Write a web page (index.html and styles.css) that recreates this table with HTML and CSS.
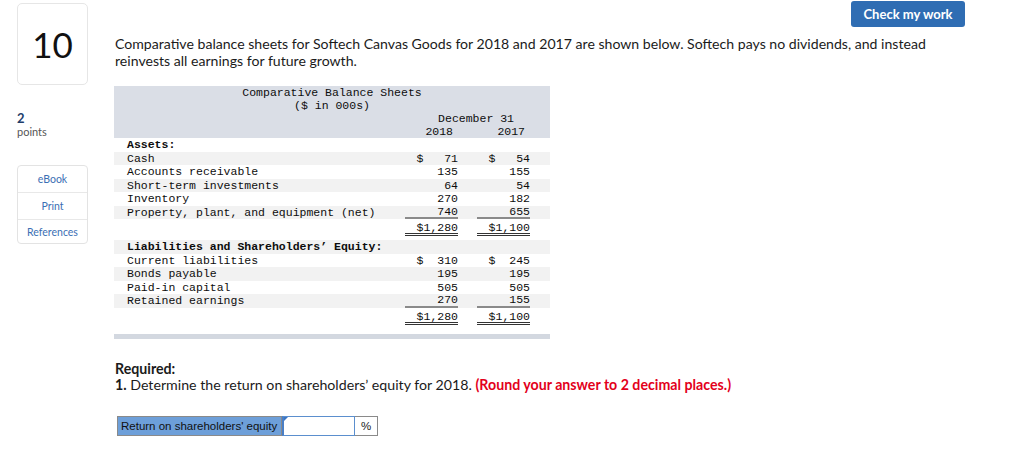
FILE: index.html
```html
<!DOCTYPE html>
<html>
<head>
<meta charset="utf-8">
<link rel="stylesheet" href="styles.css">
</head>
<body>
<div class="page">
  <aside class="side">
    <div class="qnum">10</div>
    <div class="pts">
      <div class="pts-num">2</div>
      <div class="pts-lbl">points</div>
    </div>
    <div class="tools">
      <div class="tool">eBook</div>
      <div class="tool">Print</div>
      <div class="tool">References</div>
    </div>
  </aside>
  <main class="main">
    <div class="topbar"><button class="check">Check my work</button></div>
    <p class="intro">Comparative balance sheets for Softech Canvas Goods for 2018 and 2017 are shown below. Softech pays no dividends, and instead reinvests all earnings for future growth.</p>

    <div class="sheet">
      <div class="sheet-head">
        <div class="ctr">Comparative Balance Sheets</div>
        <div class="ctr">($ in 000s)</div>
        <div class="row"><span class="lbl"></span><span class="dec">December 31</span></div>
        <div class="row"><span class="lbl"></span><span class="num yr">2018</span><span class="num yr">2017</span></div>
      </div>

      <div class="row"><span class="lbl b">Assets:</span></div>
      <div class="row alt"><span class="lbl">Cash</span><span class="num">$   71</span><span class="num">$   54</span></div>
      <div class="row"><span class="lbl">Accounts receivable</span><span class="num">135</span><span class="num">155</span></div>
      <div class="row alt"><span class="lbl">Short-term investments</span><span class="num">64</span><span class="num">54</span></div>
      <div class="row"><span class="lbl">Inventory</span><span class="num">270</span><span class="num">182</span></div>
      <div class="row alt"><span class="lbl">Property, plant, and equipment (net)</span><span class="num ul">740</span><span class="num ul">655</span></div>
      <div class="row tot"><span class="lbl"></span><span class="num dbl">$1,280</span><span class="num dbl">$1,100</span></div>

      <div class="row alt"><span class="lbl b">Liabilities and Shareholders’ Equity:</span></div>
      <div class="row"><span class="lbl">Current liabilities</span><span class="num">$  310</span><span class="num">$  245</span></div>
      <div class="row alt"><span class="lbl">Bonds payable</span><span class="num">195</span><span class="num">195</span></div>
      <div class="row"><span class="lbl">Paid-in capital</span><span class="num">505</span><span class="num">505</span></div>
      <div class="row alt"><span class="lbl">Retained earnings</span><span class="num ul">270</span><span class="num ul">155</span></div>
      <div class="row tot"><span class="lbl"></span><span class="num dbl">$1,280</span><span class="num dbl">$1,100</span></div>
      <div class="sheet-foot"></div>
    </div>

    <div class="req">
      <div class="req-h">Required:</div>
      <div><b>1.</b> Determine the return on shareholders’ equity for 2018. <span class="red">(Round your answer to 2 decimal places.)</span></div>
    </div>

    <div class="answer">
      <div class="ans-lbl">Return on shareholders' equity</div>
      <div class="ans-in"></div>
      <div class="ans-unit">%</div>
    </div>
  </main>
</div>
</body>
</html>
```

FILE: styles.css
```css
* { box-sizing: border-box; }
html, body { margin: 0; padding: 0; background: #fff; }
body { font-family: "Lato", "Open Sans", sans-serif; color: #222; }

.page { display: flex; align-items: flex-start; }

.side { width: 71px; margin-left: 17px; flex: none; padding-top: 3px; }
.qnum {
  height: 82px; border: 1px solid #e6e6e6; border-radius: 5px;
  display: flex; align-items: center; justify-content: center;
  font-size: 35px; color: #111;
}
.pts { margin-top: 26px; }
.pts-num { font-size: 13px; font-weight: 700; color: #1f3e6b; line-height: 14px; }
.pts-lbl { font-size: 11px; color: #555; line-height: 14px; }
.tools { margin-top: 26px; border: 1px solid #e3e3e3; border-radius: 4px; }
.tool { font-size: 10.5px; color: #3b6fb4; text-align: center; height: 27px; line-height: 26px; border-bottom: 1px solid #e8e8e8; }
.tool:last-child { border-bottom: 0; height: 23px; line-height: 24px; }

.main { margin-left: 27px; flex: 1; }
.topbar { display: flex; justify-content: flex-end; padding-right: 59px; padding-top: 1px; height: 35px; }
.check {
  width: 114px; height: 26px; border: 0; border-radius: 3px; background: #2f6db3;
  color: #fff; font-family: "Lato", "Open Sans", sans-serif; font-weight: 700; font-size: 13px;
}
.intro { margin: 0; font-size: 14.1px; line-height: 17px; color: #1b1b1b; width: 835px; }

.sheet { width: 436px; margin-top: 17px; margin-left: -1px; font-family: "Liberation Mono", monospace; font-size: 11.5px; color: #0d0d0d; }
.sheet-head { background: #dadee6; padding: 0; }
.ctr { text-align: center; height: 13px; line-height: 13px; }
.row { display: flex; height: 13.5px; line-height: 13.5px; padding-left: 13px; padding-right: 20px; }
.sheet-head .row { height: 13px; line-height: 13px; }
.row.alt { background: #f2f2f2; }
.lbl { flex: 1; white-space: pre; }
.b { font-weight: 700; }
.dec { margin-right: 16px; }
.num { width: 53px; text-align: right; margin-left: 19px; white-space: pre; }
.num.yr { padding-right: 5px; }
.ul { border-bottom: 2px solid #8a8a8a; }
.row .ul { height: 13.5px; line-height: 12px; }
.row.tot { height: 17px; line-height: 17px; margin-bottom: 4px; }
.dbl { border-bottom: 3px double #333; height: 17px; }
.sheet-foot { height: 5px; background: #d3d8e0; margin-top: 9px; }

.req { margin-top: 22px; font-size: 14.2px; line-height: 16px; color: #1b1b1b; }
.req-h { font-weight: 700; }
.red { color: #e3001b; font-weight: 700; }

.answer { display: flex; margin-top: 23px; margin-left: 2px; height: 20px; }
.ans-lbl { width: 165px; background: #6d9fd9; border: 1px solid #8a8a8a; font-family: "Liberation Sans", sans-serif; font-size: 11.5px; line-height: 18px; padding-left: 3px; color: #111; }
.ans-in { width: 73px; border: 1px solid #5b8fce; border-left: 2px solid #4a7fc6; background: #fff; position: relative; }
.ans-in::before { content: ""; position: absolute; left: 0; top: 0; border-top: 4px solid #3a75c4; border-right: 4px solid transparent; }
.ans-unit { width: 23px; border: 1px solid #8a8a8a; border-left: 0; font-family: "Liberation Sans", sans-serif; font-size: 11.5px; line-height: 18px; text-align: center; }
```
